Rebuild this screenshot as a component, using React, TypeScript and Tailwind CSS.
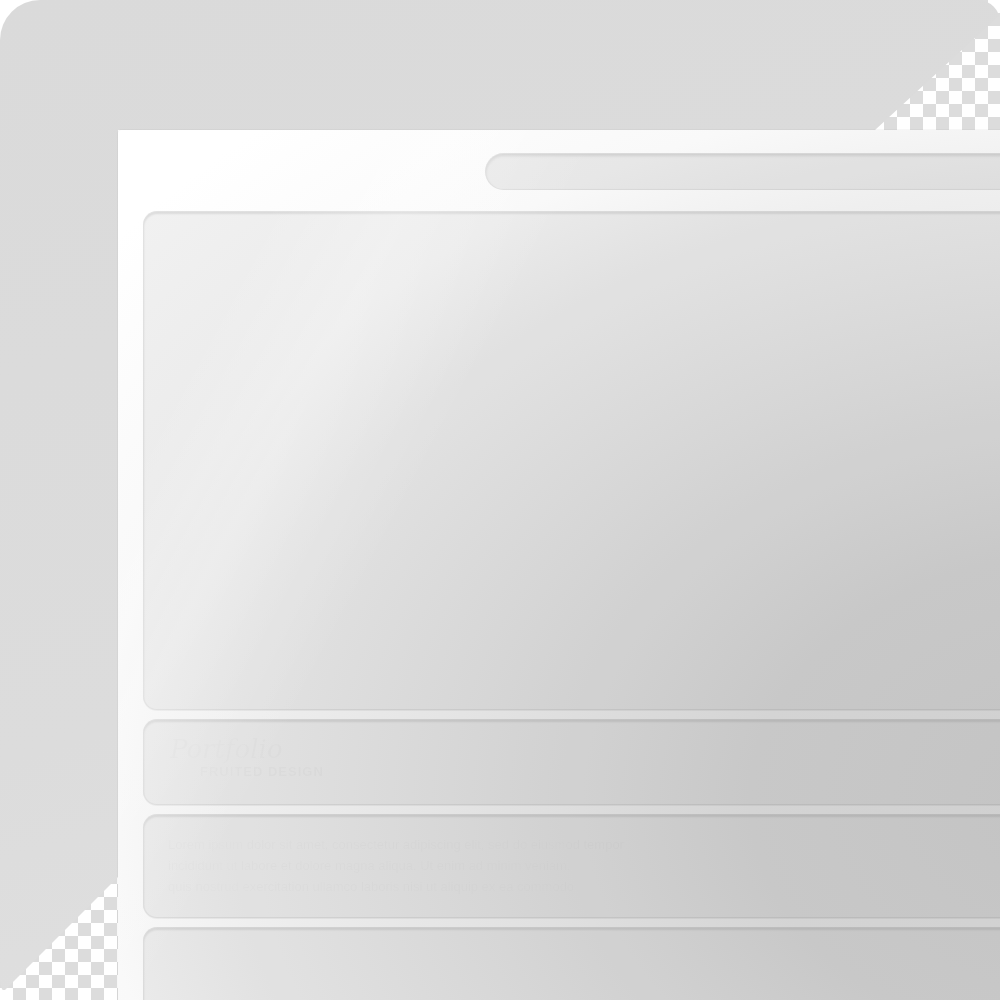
import React from 'react';

function Well({ className, children }: { className: string; children?: React.ReactNode }) {
  return (
    <div
      className={
        'rounded-[14px] border border-black/[0.06] bg-[#f1f1f1] shadow-[inset_0_2px_2px_rgba(0,0,0,0.09),0_1px_0_rgba(0,0,0,0.05)] ' +
        className
      }
    >
      {children}
    </div>
  );
}

export default function App() {
  return (
    <div className="relative flex h-[1000px] w-[1000px] overflow-hidden bg-white pl-[118px] pt-[130px] font-['Liberation_Sans',sans-serif]">
      {/* transparency checker, only seen through the cut corners */}
      <div className="absolute inset-0 bg-[conic-gradient(#dcdcdc_25%,#ffffff_0_50%,#dcdcdc_0_75%,#ffffff_0)] bg-[length:26px_26px] [clip-path:polygon(50%_0,100%_0,100%_100%,0_100%,0_50%)]" />
      {/* grey backdrop with the two cut corners */}
      <div className="absolute inset-0 rounded-tl-[40px] rounded-tr-[22px] rounded-bl-[20px] bg-[linear-gradient(165deg,#dadada_0%,#dcdcdc_60%,#e1e1e1_100%)] [clip-path:polygon(0_0,100%_0,100%_15px,875px_130px,118px_130px,118px_877px,5px_990px,0_990px)]" />

      <div className="relative h-[870px] w-[900px] shrink-0 overflow-hidden rounded-tl-[4px] bg-white px-[25px] shadow-[0_0_0_1px_rgba(0,0,0,0.03)]">
        <div className="flex pb-[21px] pt-[23px]">
          <div className="ml-[342px] h-[37px] w-[600px] shrink-0 rounded-full border border-black/[0.05] bg-[#ededed] shadow-[inset_0_2px_3px_rgba(0,0,0,0.1)]" />
        </div>

        <div className="flex w-[900px] flex-col gap-[9px]">
          <Well className="h-[499px] rounded-[12px]" />
          <Well className="flex h-[86px] flex-col pl-[26px] pt-[14px]">
            <span className="font-['DejaVu_Serif',serif] text-[26px] italic leading-[30px] text-black/[0.015]">Portfolio</span>
            <span className="ml-[30px] text-[13px] font-bold uppercase leading-[16px] tracking-[1px] text-black/[0.02]">Fruited Design</span>
          </Well>
          <Well className="flex h-[104px] flex-col justify-center gap-[5px] pl-[24px] text-[13px] leading-[16px] text-black/[0.015]">
            <span>Lorem ipsum dolor sit amet, consectetur adipiscing elit, sed do eiusmod tempor</span>
            <span>incididunt ut labore et dolore magna aliqua. Ut enim ad minim veniam,</span>
            <span>quis nostrud exercitation ullamco laboris nisi ut aliquip ex ea commodo</span>
          </Well>
          <Well className="h-[140px]" />
        </div>

        {/* lighting */}
        <div className="pointer-events-none absolute inset-0 bg-[radial-gradient(ellipse_1400px_1000px_at_982px_670px,#cfcfcf_0%,#d4d4d4_25%,#e3e3e3_45%,#efefef_62%,#f9f9f9_72%,#ffffff_90%)] mix-blend-multiply" />
        <div className="pointer-events-none absolute inset-0 bg-[linear-gradient(118deg,rgba(255,255,255,0)_14%,rgba(255,255,255,0.25)_24%,rgba(255,255,255,0)_36%)]" />
      </div>
    </div>
  );
}
